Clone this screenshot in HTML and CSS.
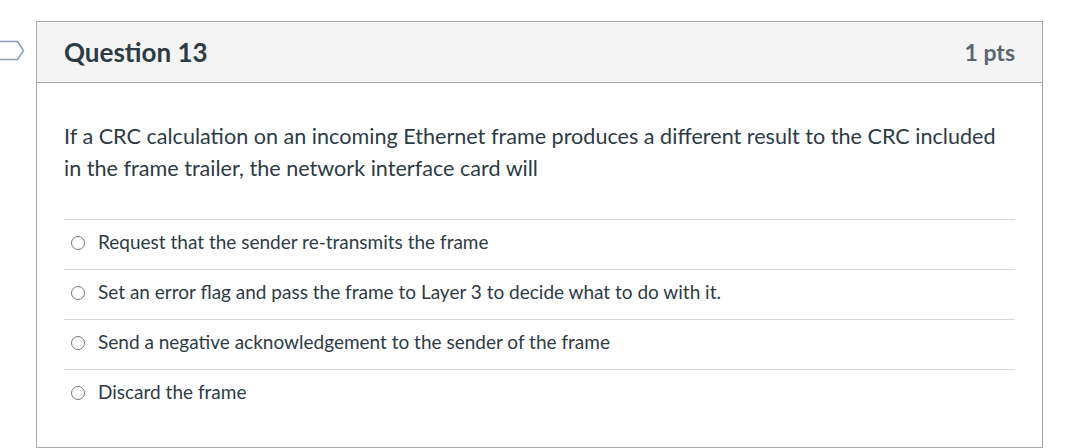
FILE: index.html
```html
<!DOCTYPE html>
<html>
<head>
<meta charset="utf-8">
<link rel="stylesheet" href="styles.css">
</head>
<body>
<div class="page">
  <div class="flag">
    <svg width="26" height="24" viewBox="0 0 26 24"><path d="M-2 2.5 H17.5 L23.5 11.5 L17.5 20.5 H-2" fill="#fff" stroke="#8aa0b6" stroke-width="1.6"/></svg>
  </div>
  <div class="card">
    <div class="header">
      <h2 class="title">Question 13</h2>
      <div class="pts">1 pts</div>
    </div>
    <div class="body">
      <p class="qtext">If a CRC calculation on an incoming Ethernet frame produces a different result to the CRC included in the frame trailer, the network interface card will</p>
      <div class="answers">
        <label class="answer"><span class="radio"></span><span class="atext">Request that the sender re-transmits the frame</span></label>
        <label class="answer"><span class="radio"></span><span class="atext">Set an error flag and pass the frame to Layer 3 to decide what to do with it.</span></label>
        <label class="answer"><span class="radio"></span><span class="atext">Send a negative acknowledgement to the sender of the frame</span></label>
        <label class="answer"><span class="radio"></span><span class="atext">Discard the frame</span></label>
      </div>
    </div>
  </div>
</div>
</body>
</html>
```

FILE: styles.css
```css
html, body {
  margin: 0;
  padding: 0;
  background: #fff;
  font-family: Lato, "Noto Sans", sans-serif;
  color: #2d3b45;
}
.page {
  position: relative;
  padding: 21px 0 0 36px;
}
.flag {
  position: absolute;
  left: 0;
  top: 39px;
  line-height: 0;
}
.card {
  width: 1005px;
  border: 1px solid #a9a9a9;
}
.header {
  height: 60px;
  background: #f4f4f4;
  border-bottom: 1px solid #a9a9a9;
  display: flex;
  align-items: center;
  justify-content: space-between;
  padding: 0 27px;
}
.title {
  margin: 0;
  font-size: 26px;
  font-weight: 700;
  color: #2d3b45;
}
.pts {
  font-size: 23px;
  font-weight: 700;
  color: #5a6670;
}
.body {
  padding: 37px 27px 28px 27px;
}
.qtext {
  margin: 0 0 35px 0;
  font-size: 21.6px;
  line-height: 32px;
  color: #2d3b45;
}
.answers {
  display: flex;
  flex-direction: column;
}
.answer {
  height: 49px;
  border-top: 1px solid #d8d8d8;
  display: flex;
  align-items: center;
  padding-left: 7px;
}
.radio {
  width: 12px;
  height: 12px;
  border: 1.5px solid #777;
  border-radius: 50%;
  box-sizing: content-box;
  margin-right: 13px;
  flex: none;
  position: relative;
  top: -2px;
}
.atext {
  font-size: 19px;
  color: #2d3b45;
  position: relative;
  top: -3px;
}
```
